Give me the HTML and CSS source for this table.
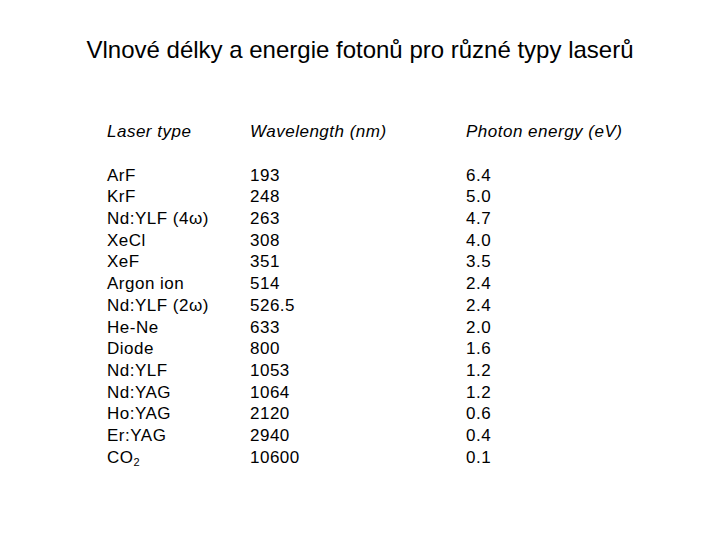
FILE: index.html
```html
<!DOCTYPE html>
<html>
<head>
<meta charset="utf-8">
<link rel="stylesheet" href="styles.css">
</head>
<body>
<div class="slide">
  <h1 class="title">Vlnové délky a energie fotonů pro různé typy laserů</h1>
  <div class="table">
    <div class="col c1">
      <div class="head">Laser type</div>
      <div class="body">
        <div>ArF</div><div>KrF</div><div>Nd:YLF (4ω)</div><div>XeCl</div><div>XeF</div><div>Argon ion</div><div>Nd:YLF (2ω)</div><div>He-Ne</div><div>Diode</div><div>Nd:YLF</div><div>Nd:YAG</div><div>Ho:YAG</div><div>Er:YAG</div><div>CO<sub>2</sub></div>
      </div>
    </div>
    <div class="col c2">
      <div class="head">Wavelength (nm)</div>
      <div class="body">
        <div>193</div><div>248</div><div>263</div><div>308</div><div>351</div><div>514</div><div>526.5</div><div>633</div><div>800</div><div>1053</div><div>1064</div><div>2120</div><div>2940</div><div>10600</div>
      </div>
    </div>
    <div class="col c3">
      <div class="head">Photon energy (eV)</div>
      <div class="body">
        <div>6.4</div><div>5.0</div><div>4.7</div><div>4.0</div><div>3.5</div><div>2.4</div><div>2.4</div><div>2.0</div><div>1.6</div><div>1.2</div><div>1.2</div><div>0.6</div><div>0.4</div><div>0.1</div>
      </div>
    </div>
  </div>
</div>
</body>
</html>
```
FILE: styles.css
```css
html, body {
  margin: 0;
  padding: 0;
  background: #fff;
}
.slide {
  width: 720px;
  height: 540px;
  font-family: "Liberation Sans", Arial, sans-serif;
  color: #000;
  overflow: hidden;
}
.title {
  margin: 0;
  padding-top: 35px;
  font-size: 24px;
  font-weight: normal;
  line-height: 30px;
  text-align: center;
}
.table {
  display: flex;
  padding-left: 107px;
  margin-top: 56px;
  font-size: 17px;
  letter-spacing: 0.5px;
  line-height: 21.7px;
}
.c1 { width: 143px; }
.c2 { width: 216px; }
.c3 { flex: 1; }
.head {
  font-style: italic;
  margin-bottom: 22px;
}
.body div {
  height: 21.7px;
  white-space: nowrap;
}
sub {
  font-size: 11px;
  line-height: 0;
  vertical-align: -3px;
}
```
